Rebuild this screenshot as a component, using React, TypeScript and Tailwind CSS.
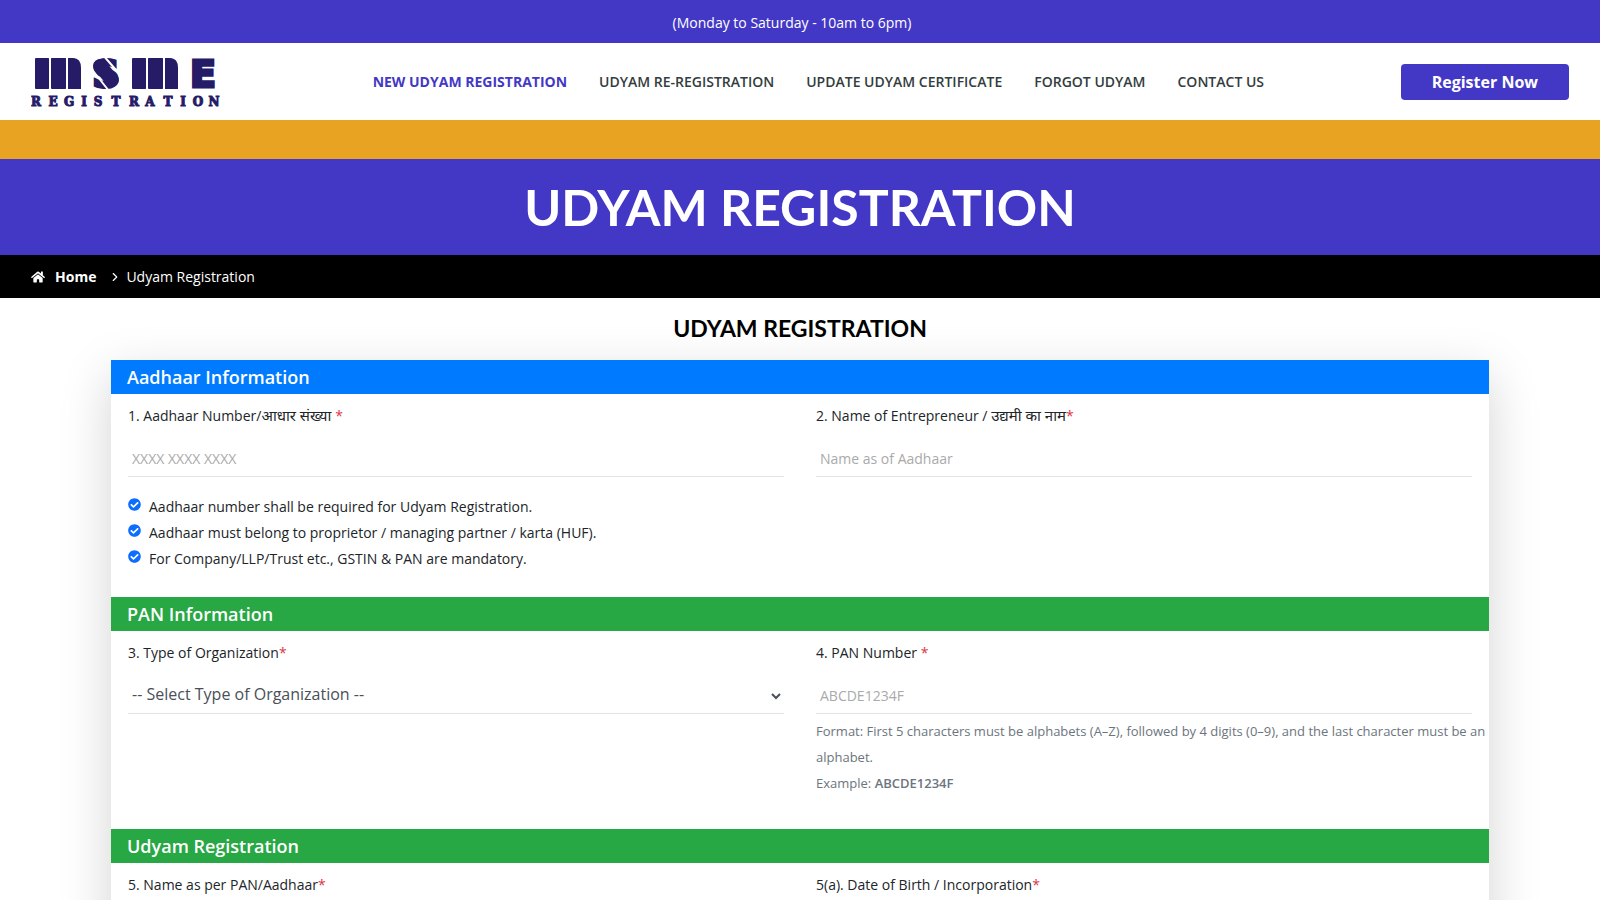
import React, { useState } from 'react';
import { FaCheckCircle, FaHome } from 'react-icons/fa';
import { ChevronRight } from 'lucide-react';

const navLinks = [
  { label: 'NEW UDYAM REGISTRATION', href: '#new', active: true },
  { label: 'UDYAM RE-REGISTRATION', href: '#re-registration' },
  { label: 'UPDATE UDYAM CERTIFICATE', href: '#update' },
  { label: 'FORGOT UDYAM', href: '#forgot' },
  { label: 'CONTACT US', href: '#contact' },
];

const aadhaarNotes = [
  'Aadhaar number shall be required for Udyam Registration.',
  'Aadhaar must belong to proprietor / managing partner / karta (HUF).',
  'For Company/LLP/Trust etc., GSTIN & PAN are mandatory.',
];

const organizationTypes = ['Proprietorship', 'Partnership Firm', 'Hindu Undivided Family', 'Private Limited Company', 'LLP', 'Trust'];

const fieldClass =
  'block h-9 w-full border-b border-[#e4e4e4] bg-transparent px-1 text-sm text-[#495057] placeholder:text-[#aaaaaa] focus:border-[#007bff] focus:outline-none';

// three stencil plates, the last one with a rounded shoulder
function Plates({ x }: { x: number }) {
  return (
    <g transform={`translate(${x} 6)`}>
      <rect width="14" height="31" rx="1" />
      <rect x="16" width="15" height="31" rx="1" />
      <path d="M33 0h5q8 0 8 10v21H33z" />
    </g>
  );
}

function Logo() {
  return (
    <svg width="205" height="60" viewBox="0 0 205 60" role="img" aria-label="MSME Registration">
      <g fill="#261b66" stroke="none">
        <Plates x={4} />
        <Plates x={101} />
        <path d="M69 14L81 28" stroke="#261b66" strokeWidth="14" strokeLinecap="round" />
      </g>
      <g fill="#261b66" stroke="#261b66" textAnchor="middle">
        <text x="27 75 124 172" y="35" fontFamily="DejaVu Sans" fontWeight="700" fontSize="38" strokeWidth="3">
          MSME
        </text>
        <text
          x="5 22 38 53 67 85 103 119 137 152 167 183"
          y="54"
          fontFamily="DejaVu Serif"
          fontWeight="700"
          fontSize="12"
          strokeWidth="1"
        >
          REGISTRATION
        </text>
      </g>
      {/* stencil cuts */}
      <g stroke="#fff" strokeWidth="2">
        <path d="M19 4V38M36 4V38M116 4V38M133 4V38M59 15L78 39M72 3L91 25" />
      </g>
    </svg>
  );
}

function SectionTitle({ children, className }: { children: React.ReactNode; className: string }) {
  return <h3 className={`px-4 text-lg leading-[34px] font-semibold text-white ${className}`}>{children}</h3>;
}

type FieldProps = { id: string; label: string; hindi?: string; children: React.ReactNode };

function Field({ id, label, hindi, children }: FieldProps) {
  return (
    <div>
      <label htmlFor={id} className="mb-3 block text-sm leading-[26px] text-[#212529]">
        {label}
        {hindi && (
          <span lang="hi" className="text-[15px] leading-none">
            {hindi}
          </span>
        )}
        <span className="text-[#dc3545]">*</span>
      </label>
      {children}
    </div>
  );
}

export default function App() {
  const [organization, setOrganization] = useState('');

  return (
    <div className="h-screen overflow-hidden bg-white font-['Open_Sans','Noto_Sans_Devanagari',sans-serif] text-[#212529]">
      <div className="bg-[#4338c6] pt-[9px] pr-4 pb-[7px] text-center text-sm leading-[27px] text-white">
        (Monday to Saturday - 10am to 6pm)
      </div>

      <header className="flex h-[77px] items-center justify-between px-[31px]">
        <a href="#home">
          <Logo />
        </a>
        <nav className="flex gap-8 text-sm">
          {navLinks.map((link) => (
            <a
              key={link.label}
              href={link.href}
              className={link.active ? 'font-bold text-[#4338c6]' : 'font-semibold text-[#333d3d]'}
            >
              {link.label}
            </a>
          ))}
        </nav>
        <button type="button" className="h-9 rounded bg-[#4338c6] px-[31px] text-base font-bold text-white">
          Register Now
        </button>
      </header>

      <div className="h-[39px] bg-[#e8a323]" />

      <div className="bg-[#4338c6] text-center">
        <h1 className="font-[Lato,sans-serif] text-[50px] leading-[96px] font-bold text-white">UDYAM REGISTRATION</h1>
      </div>

      <div className="flex h-[43px] items-center bg-black px-[31px] text-sm text-white">
        <a href="#home" className="flex items-center gap-2.5 font-bold">
          <FaHome size={14} />
          Home
        </a>
        <ChevronRight size={14} className="mr-1 ml-3" />
        <span>Udyam Registration</span>
      </div>

      <main className="px-[111px]">
        <h2 className="pb-px text-center font-[Lato,sans-serif] text-[23px] leading-[61px] font-bold text-black">
          UDYAM REGISTRATION
        </h2>

        <form className="bg-white shadow-[0_16px_48px_rgba(0,0,0,0.175)]" onSubmit={(e) => e.preventDefault()}>
          <SectionTitle className="bg-[#007bff]">Aadhaar Information</SectionTitle>
          <div className="grid grid-cols-2 gap-x-8 px-[17px] pt-[9px] pb-[25px]">
            <div>
              <Field id="aadhaar" label="1. Aadhaar Number/" hindi="आधार संख्या ">
                <input id="aadhaar" type="text" placeholder="XXXX XXXX XXXX" className={fieldClass} />
              </Field>
              <ul className="mt-[17px] text-sm leading-[26px]">
                {aadhaarNotes.map((note) => (
                  <li key={note} className="flex gap-2">
                    <FaCheckCircle size={13} className="mt-1 shrink-0 text-[#0d6efd]" />
                    {note}
                  </li>
                ))}
              </ul>
            </div>
            <Field id="entrepreneur" label="2. Name of Entrepreneur / " hindi="उद्यमी का नाम">
              <input id="entrepreneur" type="text" placeholder="Name as of Aadhaar" className={fieldClass} />
            </Field>
          </div>

          <SectionTitle className="bg-[#28a745]">PAN Information</SectionTitle>
          <div className="grid grid-cols-2 gap-x-8 px-[17px] pt-[9px] pb-8">
            <Field id="organization" label="3. Type of Organization">
              <select
                id="organization"
                value={organization}
                onChange={(e) => setOrganization(e.target.value)}
                className="block h-9 w-full border-b border-[#e4e4e4] bg-transparent pb-[3px] text-base text-[#495057] focus:outline-none"
              >
                <option value="">-- Select Type of Organization --</option>
                {organizationTypes.map((type) => (
                  <option key={type}>{type}</option>
                ))}
              </select>
            </Field>
            <div>
              <Field id="pan" label="4. PAN Number ">
                <input id="pan" type="text" placeholder="ABCDE1234F" className={fieldClass} />
              </Field>
              <p className="-mr-4 pt-1 pb-px text-[13px] leading-[26px] text-[#6c757d]">
                Format: First 5 characters must be alphabets (A–Z), followed by 4 digits (0–9), and the last character
                must be an alphabet.
                <br />
                Example: <strong className="font-semibold">ABCDE1234F</strong>
              </p>
            </div>
          </div>

          <SectionTitle className="bg-[#28a745]">Udyam Registration</SectionTitle>
          <div className="grid grid-cols-2 gap-x-8 px-[17px] pt-[9px] pb-8">
            <Field id="pan-name" label="5. Name as per PAN/Aadhaar">
              <input id="pan-name" type="text" className={fieldClass} />
            </Field>
            <Field id="birth-date" label="5(a). Date of Birth / Incorporation">
              <input id="birth-date" type="date" className={fieldClass} />
            </Field>
          </div>
        </form>
      </main>
    </div>
  );
}
